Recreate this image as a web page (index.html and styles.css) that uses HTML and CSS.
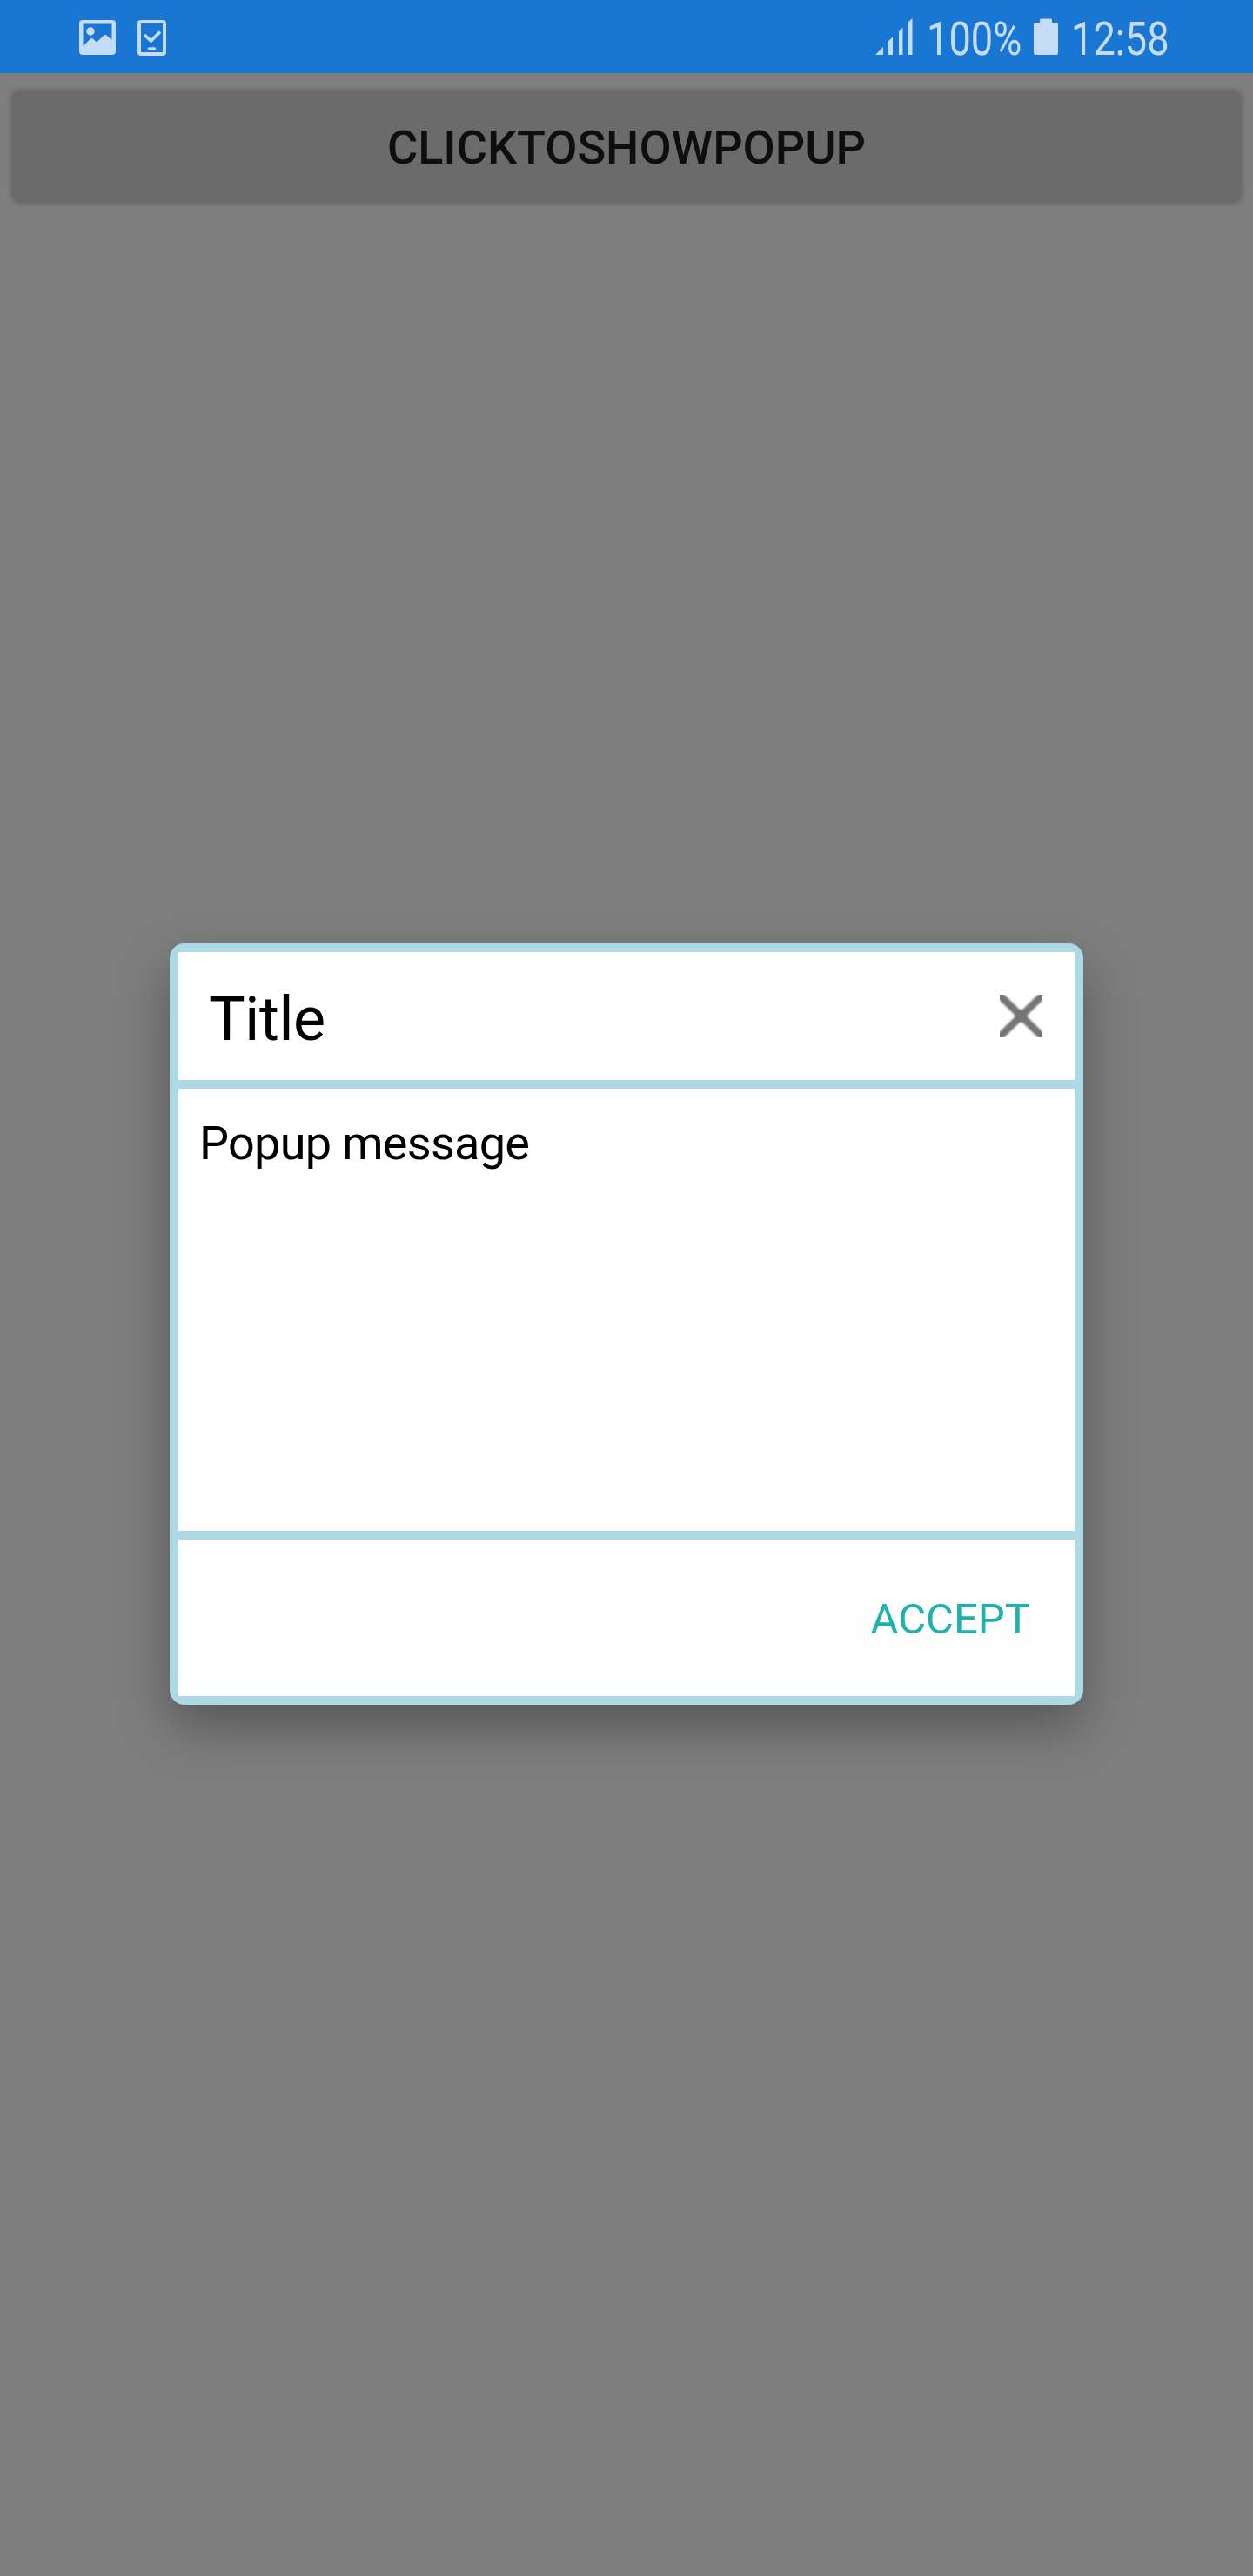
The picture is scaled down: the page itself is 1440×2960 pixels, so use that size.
FILE: index.html
```html
<!DOCTYPE html>
<html lang="en">
<head>
<meta charset="utf-8">
<title>Popup</title>
<link rel="stylesheet" href="styles.css">
</head>
<body>
<header class="status">
  <div class="status-group">
    <svg class="icon-picture" width="42" height="40" viewBox="0 0 42 40"><path fill="currentColor" fill-rule="evenodd" d="M4 0H38Q42 0 42 4V36Q42 40 38 40H4Q0 40 0 36V4Q0 0 4 0ZM4.500 4.500V30L12.500 22Q14.500 20 16.500 22L20 25.500L28 18Q30 16 32 18L37.500 23V4.500Z"/><circle cx="13" cy="13" r="4.700" fill="currentColor"/></svg>
    <svg class="icon-device" width="33" height="41" viewBox="0 0 33 41" fill="none" stroke="currentColor"><rect x="2" y="2" width="29" height="37" rx="2" stroke-width="4"/><path d="M8 17L15.500 24L26 13.500" stroke-width="3.600"/><path d="M13.500 33H19.500" stroke-width="3.600" stroke-linecap="round"/></svg>
  </div>
  <div class="status-group">
    <svg class="icon-signal" width="43" height="43" viewBox="0 0 43 43" fill="currentColor"><path d="M0 42L9 33V42ZM15 26L20 21.500V42H15ZM27 15L31.500 10.500V42H27ZM37.500 4.500L42.500 0V42H37.500Z"/></svg>
    <span class="battery-level"><span class="condensed">100%</span></span>
    <svg class="icon-battery" width="28" height="43" viewBox="0 0 28 43" fill="currentColor"><path d="M2 5H7V2Q7 0.500 8.500 0.500H19.500Q21 0.500 21 2V5H26Q28 5 28 7V40Q28 42 26 42H2Q0 42 0 40V7Q0 5 2 5Z"/></svg>
    <span class="clock"><span class="condensed">12:58</span></span>
  </div>
</header>
<main class="screen">
  <button class="show-popup">CLICKTOSHOWPOPUP</button>
  <section class="popup">
    <div class="popup-header">
      <h1 class="popup-title">Title</h1>
      <svg class="icon-close" width="49" height="49" viewBox="0 0 49 49"><defs><filter id="soft" x="-20%" y="-20%" width="140%" height="140%"><feGaussianBlur stdDeviation="1"/></filter></defs><g filter="url(#soft)"><path d="M-4 -3L53 52M53 -3L-4 52" stroke="#747474" stroke-width="8.500"/><circle cx="24.500" cy="24.500" r="7.500" fill="#747474"/></g></svg>
    </div>
    <div class="popup-body">Popup message</div>
    <div class="popup-footer"><button class="accept">ACCEPT</button></div>
  </section>
</main>
</body>
</html>
```
FILE: styles.css
```css
* { box-sizing: border-box; }
body {
  margin: 0;
  height: 2960px;
  display: flex;
  flex-direction: column;
  overflow: hidden;
  background: #7e7e7e;
  font-family: Roboto, sans-serif;
}
button {
  border: 0;
  margin: 0;
  font-family: inherit;
}
svg { display: block; flex: none; }
.status {
  flex: none;
  height: 84px;
  padding: 0 95px 0 91px;
  display: flex;
  justify-content: space-between;
  background: #1976d2;
  color: #c5dcf4;
}
.status-group { display: flex; align-items: flex-start; }
.icon-picture { margin-top: 23px; }
.icon-device { margin: 23px 0 0 25px; }
.icon-signal { margin-top: 21px; }
.icon-battery { margin: 21px 15px 0 13px; }
.battery-level, .clock {
  height: 84px;
  padding-top: 3px;
  font-size: 53.500px;
  line-height: 84px;
  white-space: nowrap;
}
.battery-level { width: 110px; margin-left: 16px; }
.clock { width: 114px; }
.condensed {
  display: inline-block;
  transform: scaleX(0.845);
  transform-origin: 0 50%;
}
.screen {
  flex: 1;
  display: flex;
  flex-direction: column;
  align-items: center;
  padding: 20px 14px 0;
}
.show-popup {
  align-self: stretch;
  height: 127px;
  padding: 5px 0 0;
  border-radius: 8px;
  background: #6b6b6b;
  box-shadow: 0 1px 7px rgba(0, 0, 0, 0.3);
  color: #0e0e0e;
  font-size: 54px;
  font-weight: 500;
  line-height: 122px;
}
.popup {
  width: 1050px;
  height: 875px;
  margin-top: 853px;
  display: flex;
  flex-direction: column;
  gap: 10px;
  padding: 10px;
  border-radius: 17px;
  background: #add8e6;
  box-shadow: 0 26px 60px rgba(0, 0, 0, 0.31);
  color: #000;
}
.popup-header {
  height: 147px;
  padding: 0 37px 0 35px;
  display: flex;
  align-items: center;
  justify-content: space-between;
  background: #fff;
}
.popup-title {
  margin: 0;
  padding-top: 7px;
  font-size: 70px;
  font-weight: 400;
  line-height: 80px;
  letter-spacing: -0.4px;
}
.popup-body {
  flex: 1;
  padding: 28px 24px;
  background: #fff;
  font-size: 54px;
  line-height: 70px;
  letter-spacing: -0.7px;
}
.popup-footer {
  height: 180px;
  padding: 3px 51px 0;
  display: flex;
  align-items: center;
  justify-content: flex-end;
  background: #fefefe;
}
.accept {
  padding: 0;
  background: none;
  color: #20b2aa;
  font-size: 49px;
  line-height: 60px;
}
```
